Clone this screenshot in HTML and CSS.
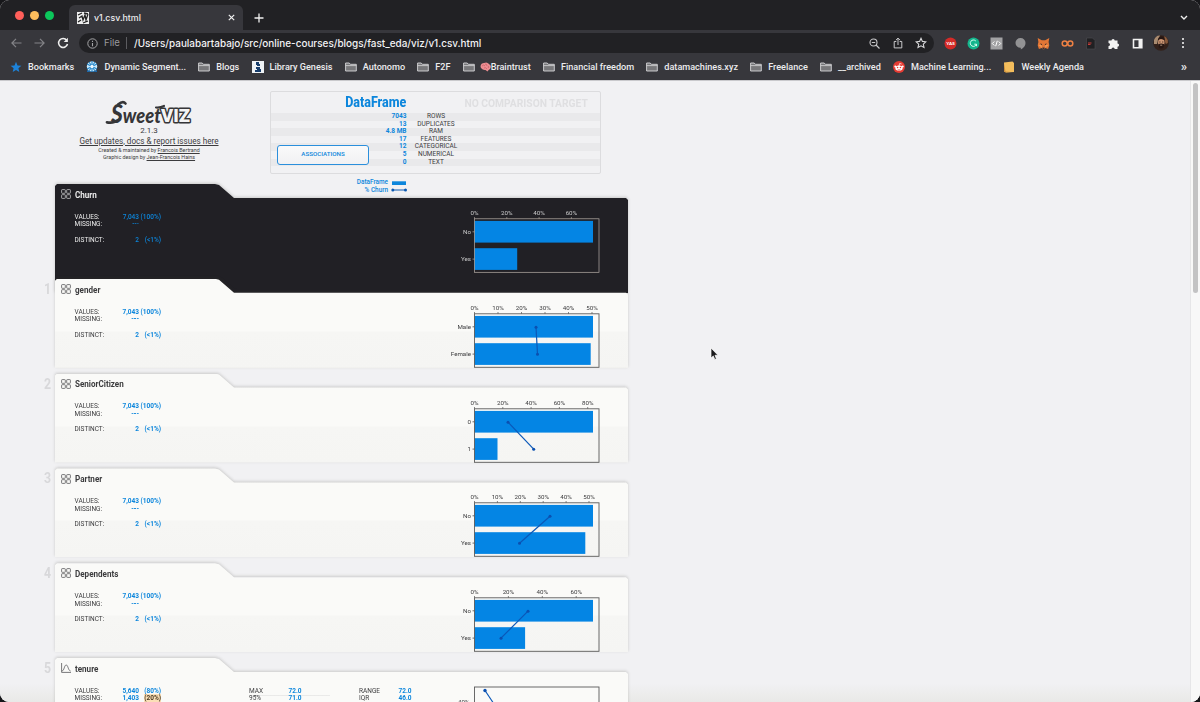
FILE: index.html
```html
<!DOCTYPE html>
<html lang="en">
<head>
    <meta charset="UTF-8">
    <meta name="viewport" content="width=device-width, initial-scale=1.0">
    <title>v1.csv.html</title>
    <link rel="stylesheet" href="styles.css">
</head>
<body>

    <svg class="defs" width="0" height="0">
        <symbol id="folder" viewBox="0 0 12 12">
            <path d="M.6 10V2h3.6l1.2 1.3h5.9V10z" fill="#77777a" stroke="#d6d6d8" stroke-width=".9"/>
            <path d="M.6 4.6h10.7" stroke="#d6d6d8" stroke-width=".8"/>
        </symbol>
        <symbol id="cat" viewBox="0 0 10 10">
            <g fill="none" stroke="currentColor" stroke-width=".9">
                <rect x=".6" y=".6" width="3.7" height="3.7" rx=".6"/>
                <rect x="5.7" y=".6" width="3.7" height="3.7" rx=".6"/>
                <rect x=".6" y="5.7" width="3.7" height="3.7" rx=".6"/>
                <rect x="5.7" y="5.7" width="3.7" height="3.7" rx=".6"/>
            </g>
        </symbol>
        <symbol id="num" viewBox="0 0 10 10">
            <path d="M.6 0v9.4H10" fill="none" stroke="currentColor" stroke-width=".9"/>
            <path d="M1 8C3.4 7.6 3.2 2 5.2 2S7 7.4 9.5 8" fill="none" stroke="currentColor" stroke-width=".9"/>
        </symbol>
    </svg>

    <div class="window">
        <div class="tabstrip">
            <div class="lights"><i class="red"></i><i class="yellow"></i><i class="green"></i></div>
            <div class="tab">
                <svg width="12" height="12" viewBox="0 0 12 12"><rect width="12" height="12" fill="#eee"/><path d="M1 3l4-2M2 6l3-2 1 4 2-5 1 5 2-6M1 10l3-2M6 11l5-2M7 1l4 1" stroke="#222" stroke-width="1.3" fill="none"/></svg>
                <span class="tab-title">v1.csv.html</span>
                <svg class="close" width="7" height="7" viewBox="0 0 7 7"><path d="M.8.8l5.4 5.4M6.2.8L.8 6.2" stroke="#f0f0f0" stroke-width="1.2"/></svg>
            </div>
            <svg class="plus" width="10" height="10" viewBox="0 0 10 10"><path d="M5 .5v9M.5 5h9" stroke="#f0f0f0" stroke-width="1.3"/></svg>
            <svg class="chevron" width="8" height="6" viewBox="0 0 8 6"><path d="M1 1l3 3 3-3" stroke="#eee" stroke-width="1.4" fill="none"/></svg>
        </div>

        <div class="toolbar">
            <div class="nav">
                <svg width="11" height="10" viewBox="0 0 11 10"><path d="M10.5 5H1M5 .8L.9 5 5 9.2" stroke="#838387" stroke-width="1.2" fill="none"/></svg>
                <svg width="11" height="10" viewBox="0 0 11 10"><path d="M.5 5H10M6 .8L10.1 5 6 9.2" stroke="#838387" stroke-width="1.2" fill="none"/></svg>
                <svg width="12" height="12" viewBox="0 0 12 12"><path d="M9.7 3.2A4.5 4.5 0 1 0 10.5 7" stroke="#f0f0f0" stroke-width="1.5" fill="none"/><path d="M10.9.8v4.2H6.7z" fill="#f0f0f0"/></svg>
            </div>
            <div class="address">
                <svg width="11" height="11" viewBox="0 0 11 11"><circle cx="5.5" cy="5.5" r="4.7" fill="none" stroke="#a5a5a8"/><path d="M5.5 4.9v3.3M5.5 2.7v1.2" stroke="#a5a5a8" stroke-width="1.1"/></svg>
                <span class="scheme">File</span>
                <span class="url">/Users/paulabartabajo/src/online-courses/blogs/fast_eda/viz/v1.csv.html</span>
                <div class="address-icons">
                    <svg width="11" height="11" viewBox="0 0 11 11"><circle cx="4.5" cy="4.5" r="3.5" fill="none" stroke="#c8c8ca" stroke-width="1.1"/><path d="M7 7l3.5 3.5M2.8 4.5h3.4" stroke="#c8c8ca" stroke-width="1.2"/></svg>
                    <svg width="10" height="12" viewBox="0 0 10 12"><path d="M3.3 4.5H1.2v6.4h7.6V4.5H6.7M5 8V1.2M2.9 3.2L5 1.1l2.1 2.1" stroke="#c8c8ca" fill="none"/></svg>
                    <svg width="12" height="12" viewBox="0 0 12 12"><path d="M6 1.3l1.4 3.1 3.4.4-2.5 2.3.7 3.4L6 8.8l-3 1.7.7-3.4L1.2 4.8l3.4-.4z" fill="none" stroke="#d8d8da" stroke-width="1.1"/></svg>
                </div>
            </div>
            <div class="extensions">
                <svg width="13" height="13" viewBox="0 0 13 13"><circle cx="6.5" cy="6.5" r="6" fill="#d42b28"/><text x="6.5" y="8.2" class="yas">YAS</text></svg>
                <svg width="13" height="13" viewBox="0 0 13 13"><circle cx="6.5" cy="6.5" r="6" fill="#14b58c"/><path d="M8.8 4A3.2 3.2 0 1 0 9.5 7.2H7.3M9.5 7.2v2" fill="none" stroke="#d9fff2"/></svg>
                <svg width="13" height="13" viewBox="0 0 13 13"><rect x=".5" y=".5" width="12" height="12" fill="#a2a2a4"/><path d="M4.3 4.5l-2 2 2 2M8.7 4.5l2 2-2 2M7.3 3.8L5.7 9.2" fill="none" stroke="#fff"/></svg>
                <svg width="13" height="13" viewBox="0 0 13 13"><path d="M6.5 1a5 4.8 0 0 1 5 4.9c0 3.2-2.5 5.5-4.7 6.5V10.7A4.9 4.9 0 0 1 1.5 5.9 5 4.8 0 0 1 6.5 1z" fill="#929294"/></svg>
                <svg width="13" height="13" viewBox="0 0 13 13"><path d="M.7 1l4.1 2.2h3.4L12.3 1l-.7 4 .7 3.3-1.2 3.6-2.9-.8-1 1.1H5.8l-1-1.1-2.9.8L.7 8.3 1.4 5z" fill="#e37635"/><path d="M1.5 8h3l.6 3M11.5 8h-3l-.6 3" fill="#f39c56"/><path d="M3.6 6.8l1.5.9M9.4 6.8l-1.5.9" stroke="#392c2b"/><path d="M5.5 10.5h2v1.4h-2z" fill="#382f36"/></svg>
                <svg width="13" height="13" viewBox="0 0 13 13"><circle cx="3.7" cy="6.5" r="2.5" fill="none" stroke="#ee8144" stroke-width="1.5"/><circle cx="9.3" cy="6.5" r="2.5" fill="none" stroke="#ee8144" stroke-width="1.5"/></svg>
                <svg width="13" height="13" viewBox="0 0 13 13"><path d="M2.5 1h6l2.5 2.5V12H2.5z" fill="#202023" stroke="#4d4d50" stroke-width=".6"/><path d="M4 6h3.5M4 7.5h2.5" stroke="#c83c38"/></svg>
                <svg width="13" height="13" viewBox="0 0 13 13"><path d="M1.5 3.5h3a1.6 1.6 0 1 1 3.2 0h2.8v3a1.6 1.6 0 1 1 0 3.2V12H7.7a1.6 1.6 0 0 0-3.2 0h-3V9a1.5 1.5 0 0 0 0-3z" fill="#f2f2f2"/></svg>
                <svg width="13" height="13" viewBox="0 0 13 13"><path d="M2.5 2.5h8.3v8.2H2.5z" fill="none" stroke="#f2f2f2" stroke-width="1.6"/><path d="M7.5 2.5h3.3v8.2H7.5z" fill="#f2f2f2"/></svg>
                <svg class="avatar" width="16" height="16" viewBox="0 0 16 16"><circle cx="8" cy="8" r="7.8" fill="#33211a"/><path d="M1 5q2-5 6-4.500L5 5 4 9H1z" fill="#a98b70"/><path d="M14.8 5q-1.500-3-3.500-4l.5 5 1 3 2-1z" fill="#8a5a3b"/><ellipse cx="8.3" cy="7.5" rx="3.2" ry="4.2" fill="#cd9673"/><path d="M4.7 5.5q3-3 7.2 0-.5-4-3.600-4T4.7 5.5M5.2 9.3q1-.8 3-.8t3 .8q0 4.200-3 4.200t-3-4.200" fill="#271713"/><path d="M6.3 7h1.2M9.1 7h1.2" stroke="#271713" stroke-width=".8"/><path d="M7.2 10.2h2" stroke="#d9b8a0" stroke-width=".7"/></svg>
                <svg class="dots" width="4" height="12" viewBox="0 0 4 12"><g fill="#f0f0f0"><circle cx="2" cy="2" r="1.1"/><circle cx="2" cy="6" r="1.1"/><circle cx="2" cy="10" r="1.1"/></g></svg>
            </div>
        </div>

        <div class="bookmarks">
            <a><svg width="12" height="12" viewBox="0 0 12 12"><path d="M6 .8l1.5 3.6 3.9.3-3 2.5.9 3.8L6 9l-3.3 2 .9-3.8-3-2.5 3.9-.3z" fill="#1d82d8"/></svg><span>Bookmarks</span></a>
            <a><svg width="12" height="12" viewBox="0 0 12 12"><circle cx="6" cy="5.5" r="5.2" fill="#c9e8fa"/><path d="M6 0v11M1 3l10 5M11 3L1 8M3 1l6 9M9 1L3 10" stroke="#2385c9" stroke-width="1.1"/><circle cx="6" cy="5.5" r="1.7" fill="#eaf8ff"/><path d="M1 9q5 3 10 0v2H1z" fill="#1c68aa"/></svg><span>Dynamic Segment...</span></a>
            <a><svg width="12" height="12"><use href="#folder"/></svg><span>Blogs</span></a>
            <a><svg width="12" height="12" viewBox="0 0 12 12"><path d="M0 0h12v12H0z" fill="#eef2f5"/><path d="M4 1h3v2h1v2H5v1h3v2h1v3H3V9h2V8H4V6h1V4H4z" fill="#173d6c"/></svg><span>Library Genesis</span></a>
            <a><svg width="12" height="12"><use href="#folder"/></svg><span>Autonomo</span></a>
            <a><svg width="12" height="12"><use href="#folder"/></svg><span>F2F</span></a>
            <a class="brain"><svg width="12" height="12"><use href="#folder"/></svg><svg class="brain-icon" width="11" height="10" viewBox="0 0 11 10"><path d="M1 6C-.5 3 2 1 4 1q3-1.500 5 1 3 2 1 5Q8 8 7.5 9.5L5.5 8Q3 8.5 1 6z" fill="#ec8e92"/><path d="M2 4q2-2 3 0M5 2q2 0 2 2M4 6q2-1 3 1M8 4q1.500 1 0 2" stroke="#c95a66" stroke-width=".7" fill="none"/></svg><span>Braintrust</span></a>
            <a><svg width="12" height="12"><use href="#folder"/></svg><span>Financial freedom</span></a>
            <a><svg width="12" height="12"><use href="#folder"/></svg><span>datamachines.xyz</span></a>
            <a><svg width="12" height="12"><use href="#folder"/></svg><span>Freelance</span></a>
            <a><svg width="12" height="12"><use href="#folder"/></svg><span>__archived</span></a>
            <a><svg width="12" height="12" viewBox="0 0 12 12"><circle cx="6" cy="6" r="6" fill="#e53b33"/><ellipse cx="6" cy="7" rx="3.7" ry="2.6" fill="#fff"/><circle cx="2.3" cy="5.5" r="1" fill="#fff"/><circle cx="9.7" cy="5.5" r="1" fill="#fff"/><path d="M6 5l.6-2.500 2 .5" stroke="#fff" stroke-width=".7" fill="none"/><circle cx="4.6" cy="6.5" r=".8" fill="#e53b33"/><circle cx="7.4" cy="6.5" r=".8" fill="#e53b33"/><path d="M4.6 8.3q1.400.8 2.8 0" stroke="#e53b33" stroke-width=".5" fill="none"/></svg><span>Machine Learning...</span></a>
            <a><svg width="12" height="12" viewBox="0 0 12 12"><path d="M1 1.500L9.500.5 11 2v9l-8 .5-2-1z" fill="#f3bd5c"/><path d="M1 2l1.500 8.500L8 11l-5 .5-2-1z" fill="#cc8f3c"/></svg><span>Weekly Agenda</span></a>
            <b class="more">»</b>
        </div>

        <div class="page">
            <div class="report">
                <header>
                    <div class="brand">
                        <svg class="logo" width="88" height="28" viewBox="0 0 88 28">
                            <path d="M2 23.300Q9 24.500 14 20.500" stroke="#363638" stroke-width="2.8" fill="none" stroke-linecap="round"/>
                            <path d="M13 5.500Q18 1.500 20.500 4.500" stroke="#363638" stroke-width="2.6" fill="none" stroke-linecap="round"/>
                            <text x="6" y="23.5" class="logo-sweet" textLength="50" lengthAdjust="spacingAndGlyphs"><tspan class="logo-s">S</tspan>weet</text>
                            <path d="M51 8.500q4 .5 8-1.500" stroke="#363638" stroke-width="2.2" fill="none" stroke-linecap="round"/>
                            <text x="56" y="22.8" class="logo-viz" textLength="29" lengthAdjust="spacingAndGlyphs">VIZ</text>
                        </svg>
                        <div class="version">2.1.3</div>
                        <a class="updates">Get updates, docs &amp; report issues here</a>
                        <div class="credit">Created &amp; maintained by <a>Francois Bertrand</a></div>
                        <div class="credit">Graphic design by <a>Jean-Francois Hains</a></div>
                    </div>

                    <div class="overview">
                        <div class="summary">
                            <div class="summary-head">
                                <h1><span>DataFrame</span></h1>
                                <h2><span>NO COMPARISON TARGET</span></h2>
                            </div>
                            <div class="row"><b>7043</b><span>ROWS</span></div>
                            <div class="row"><b>13</b><span>DUPLICATES</span></div>
                            <div class="row"><b>4.8 MB</b><span>RAM</span></div>
                            <div class="row"><b>17</b><span>FEATURES</span></div>
                            <div class="row"><b>12</b><span>CATEGORICAL</span></div>
                            <div class="row"><b>5</b><span>NUMERICAL</span></div>
                            <div class="row"><b>0</b><span>TEXT</span></div>
                            <button>ASSOCIATIONS</button>
                        </div>
                        <div class="legend">
                            <div>DataFrame <svg width="16" height="6" viewBox="0 0 16 6"><path d="M1 1.3h14v3.7H1z" fill="#0c86dc"/></svg></div>
                            <div>% Churn <svg width="16" height="6" viewBox="0 0 16 6"><path d="M1.5 3h13" stroke="#0b58b0"/><circle cx="1.8" cy="3" r="1.5" fill="#0b58b0"/><circle cx="14.5" cy="3" r="1.5" fill="#0b58b0"/></svg></div>
                        </div>
                    </div>
                </header>

                <main id="features"></main>
            </div>
            <div class="scrollbar"><div class="thumb"></div></div>
        </div>

        <svg class="cursor" width="9" height="14" viewBox="0 0 9 14"><path d="M1 1v10l2.3-2.1L4.8 12.5l1.6-.7L5 8.300h3z" fill="#1b1b1d" stroke="#fff" stroke-width=".7"/></svg>
    </div>

    <script src="script.js"></script>
</body>
</html>
```
FILE: script.js
```js
// bar ends, line points and tick step are in chart pixels
const features = [
    { name: 'Churn', target: true, step: 32.3, ticks: ['0%', '20%', '40%', '60%'], bars: [['No', 118.5], ['Yes', 42.7]] },
    { name: 'gender', step: 23.5, ticks: ['0%', '10%', '20%', '30%', '40%', '50%'], bars: [['Male', 118.5], ['Female', 116.2]], line: [61.5, 63] },
    { name: 'SeniorCitizen', step: 28.3, ticks: ['0%', '20%', '40%', '60%', '80%'], bars: [['0', 118.5], ['1', 23]], line: [33.5, 59.2] },
    { name: 'Partner', step: 22.9, ticks: ['0%', '10%', '20%', '30%', '40%', '50%'], bars: [['No', 118.5], ['Yes', 110.8]], line: [75.5, 45] },
    { name: 'Dependents', step: 33.9, ticks: ['0%', '20%', '40%', '60%'], bars: [['No', 118.5], ['Yes', 50.6]], line: [53.5, 26.5] },
    { name: 'tenure', numeric: true }
];

const left = 35.5;

function drawChart(f) {
    let out = '';
    if (f.numeric) {
        out += `<path class="line" d="M${left + 10.5} 32.5l12 18"/><circle class="dot" cx="${left + 10.5}" cy="32.5" r="1.7"/>`;
        out += `<text class="side" x="${left - 5}" y="46">40%</text>`;
        out += `<rect class="axis" x="${left}" y="29" width="124.5" height="59"/>`;
    } else {
        f.ticks.forEach((t, i) => {
            const x = left + i * f.step;
            out += `<text class="top" x="${x}" y="31.2">${t}</text><path class="axis" d="M${x} 33.2v1.5"/>`;
        });
        f.bars.forEach(([label, width], i) => {
            const y = 36.9 + i * 27.3;
            out += `<rect class="bar" x="${left}" y="${y}" width="${width}" height="21.7"/>`;
            out += `<text class="side" x="${left - 3.5}" y="${y + 13.2}">${label}</text><path class="axis" d="M${left - 2} ${y + 10.9}h2"/>`;
        });
        if (f.line) {
            const [a, b] = f.line;
            out += `<path class="line" d="M${left + a} 48.2L${left + b} 75.2"/>`;
            out += `<circle class="dot" cx="${left + a}" cy="48.2" r="1.5"/><circle class="dot" cx="${left + b}" cy="75.2" r="1.5"/>`;
        }
        out += `<rect class="axis" x="${left}" y="34.8" width="124.5" height="53.5"/>`;
    }
    return `<svg class="chart" width="165" height="89" viewBox="0 0 165 89">${out}</svg>`;
}

function drawStats(f) {
    if (f.numeric) {
        return `
            <dl class="counts">
                <dt>VALUES:</dt><dd>5,640</dd><dd>(80%)</dd>
                <dt>MISSING:</dt><dd>1,403</dd><dd><mark>(20%)</mark></dd>
            </dl>
            <dl class="extra max"><dt>MAX</dt><dd>72.0</dd><dt>95%</dt><dd>71.0</dd></dl>
            <dl class="extra"><dt>RANGE</dt><dd>72.0</dd><dt>IQR</dt><dd>46.0</dd></dl>`;
    }
    return `
        <dl class="counts">
            <dt>VALUES:</dt><dd>7,043</dd><dd>(100%)</dd>
            <dt>MISSING:</dt><dd>---</dd><dd></dd>
            <dt class="gap">DISTINCT:</dt><dd class="gap">2</dd><dd class="gap">(&lt;1%)</dd>
        </dl>`;
}

document.getElementById('features').innerHTML = features.map((f, i) => `
    <section class="feature ${f.target ? 'target' : ''}">
        <div class="rank"><span>${i || ''}</span></div>
        <div class="card">
            <div class="info">
                <h3><svg width="10" height="10"><use href="#${f.numeric ? 'num' : 'cat'}"/></svg><span>${f.name}</span></h3>
                <div class="stats">${drawStats(f)}</div>
            </div>
            ${drawChart(f)}
        </div>
    </section>`).join('');
```
FILE: styles.css
```css
* {
    margin: 0;
    padding: 0;
    box-sizing: border-box;
}

body {
    background: #17171a;
    font-family: Roboto, "Liberation Sans", sans-serif;
    height: 100vh;
    overflow: hidden;
}

svg {
    flex: none;
    display: block;
}

.defs {
    position: absolute;
}

.window {
    position: relative;
    height: 702px;
    border-radius: 9px;
    overflow: hidden;
    display: flex;
    flex-direction: column;
    background: #f1f1f3;
}

/* browser chrome */
.tabstrip {
    height: 30px;
    background: #212124;
    display: flex;
    align-items: center;
}

.lights {
    display: flex;
    gap: 6px;
    width: 69px;
    padding-left: 15px;
}

.lights i {
    width: 9px;
    height: 9px;
    border-radius: 50%;
}

.red { background: #ff5f5a; }
.yellow { background: #fdbd5c; }
.green { background: #0cc75b; }

.tab {
    width: 174px;
    height: 25px;
    align-self: flex-end;
    background: #37373c;
    border-radius: 6px 6px 0 0;
    display: flex;
    align-items: center;
    padding: 0 8px;
}

.tab-title {
    margin-left: 5px;
    color: #ececee;
    font: 500 8.8px Inter, sans-serif;
}

.close {
    margin-left: auto;
}

.plus {
    margin: 5px 0 0 11px;
}

.chevron {
    margin: 5px 12px 0 auto;
}

.toolbar {
    height: 25px;
    padding-top: 1px;
    background: #37373c;
    display: flex;
    align-items: center;
}

.nav {
    display: flex;
    align-items: center;
    gap: 12px;
    width: 79px;
    padding-left: 11px;
}

.address {
    width: 855px;
    height: 20px;
    padding: 0 7px 0 8px;
    border-radius: 10px;
    background: #212124;
    display: flex;
    align-items: center;
    font: 500 9.93px Inter, sans-serif;
}

.scheme {
    width: 23px;
    margin-left: 6px;
    border-right: 1px solid #5c5c60;
    color: #98989c;
    font-weight: 400;
    font-size: 9.6px;
    line-height: 12px;
}

.url {
    color: #f3f3f5;
    margin-left: 7px;
}

.address-icons {
    margin-left: auto;
    display: flex;
    align-items: center;
    gap: 12.5px;
}

.extensions {
    display: flex;
    align-items: center;
    gap: 10.4px;
    padding-left: 9.6px;
}

.yas {
    font: 900 4.5px Lato, sans-serif;
    fill: #fff;
    text-anchor: middle;
}

.avatar {
    margin-left: -1px;
}

.dots {
    margin-left: 1px;
}

.bookmarks {
    height: 25px;
    background: #37373c;
    display: flex;
    align-items: center;
    gap: 12.2px;
    padding: 0 13px 2px 10px;
    color: #ececee;
    font: 500 9.1px Roboto, sans-serif;
    white-space: nowrap;
}

.bookmarks a {
    display: flex;
    align-items: center;
    gap: 6px;
}

.bookmarks .brain {
    gap: 5px;
}

.brain-icon {
    margin-right: -5px;
}

.more {
    margin-left: auto;
    font-size: 13px;
    font-weight: 500;
}

/* report page */
.page {
    flex: 1;
    min-height: 0;
    overflow: hidden;
    display: flex;
    justify-content: space-between;
    border-top: 1px solid #c9c9cc;
    background: linear-gradient(#f1f1f3 97%, #e9e9e7);
}

.report {
    width: 640px;
    color: #3c3c3e;
}

.scrollbar {
    width: 10px;
    padding: 2px 2px 0;
    border-left: 1px solid #e6e6e8;
    background: #f8f8f8;
}

.thumb {
    height: 210px;
    border-radius: 3px;
    background: #c3c3c4;
}

header {
    height: 103px;
    display: flex;
}

.brand {
    width: 270px;
    padding: 18px 0 0 28px;
    display: flex;
    flex-direction: column;
    align-items: center;
}

.logo {
    overflow: visible;
}

.logo-sweet {
    font: italic 900 21px Lato, sans-serif;
    fill: #363638;
}

.logo-s {
    font-size: 26px;
}

.logo-viz {
    font: 900 19px Roboto, sans-serif;
    fill: #f4f4f5;
    stroke: #363638;
    stroke-width: 3px;
    stroke-linejoin: round;
    paint-order: stroke;
}

.version {
    font-size: 8px;
    line-height: 9px;
    margin-top: -1.4px;
}

.updates {
    font-size: 8.15px;
    line-height: 12px;
    text-decoration: underline;
}

.credit {
    font-size: 5.35px;
    line-height: 7.4px;
}

.credit a {
    text-decoration: underline;
}

.overview {
    width: 331px;
    padding-top: 10px;
}

.summary {
    position: relative;
    height: 83px;
    border: 1px solid #dcdcde;
    border-radius: 2px;
}

.summary-head {
    height: 21px;
    display: flex;
    align-items: center;
    justify-content: space-between;
    padding-right: 12px;
}

h1 {
    width: 135.5px;
    text-align: right;
    font-size: 14.4px;
    font-weight: 800;
    color: #0c86dc;
}

h2 {
    font-size: 11.8px;
    color: #dfdfe1;
}

h1 span,
h2 span {
    display: inline-block;
    transform: scaleX(.87);
    transform-origin: right;
}

.row {
    height: 7.6px;
    line-height: 7.8px;
    display: flex;
    font-size: 6.5px;
}

.row:nth-child(even) {
    background: #e9e9eb;
}

.row b {
    width: 135.5px;
    text-align: right;
    color: #0c86dc;
}

.row span {
    width: 59px;
    text-align: center;
}

/* sits over the striped rows */
.summary button {
    position: absolute;
    left: 6px;
    bottom: 8px;
    width: 92px;
    height: 20px;
    padding-bottom: 2px;
    border: 1px solid #2b8fdc;
    border-radius: 3px;
    background: linear-gradient(#fafafa, #f1f1f3);
    color: #0c86dc;
    font: 500 6.2px Roboto, sans-serif;
}

.legend {
    width: 137px;
    padding-top: 5px;
    color: #0c86dc;
    font-size: 6.4px;
    font-weight: 500;
    line-height: 7.5px;
}

.legend div {
    display: flex;
    align-items: center;
    justify-content: flex-end;
    gap: 3px;
}

/* feature cards */
.feature {
    display: flex;
    height: 94.8px;
}

.rank {
    width: 55px;
    height: 21px;
    padding-right: 4px;
    text-align: right;
    color: #d8d8da;
    font-size: 14px;
    line-height: 21px;
    font-weight: bold;
}

.rank span {
    display: inline-block;
    transform: scaleX(.88);
    transform-origin: right;
}

.card {
    position: relative;
    width: 573px;
    height: 89px;
    display: flex;
    filter: drop-shadow(0 -1px 1.5px rgba(60, 60, 50, .22));
}

.card::before {
    content: "";
    position: absolute;
    inset: 0;
    z-index: -1;
    background: linear-gradient(#fafaf8 0, #fafaf8 58%, #f6f6f4 60%, #f5f5f3);
    clip-path: polygon(0 2px, 2px 0, 160px 0, 164px 1px, 179px 14px, 571px 14px, 573px 16px, 573px 100%, 0 100%);
}

.target .card {
    height: 109px;
    color: #ececec;
}

.target .card::before {
    background: #212025;
}

.info {
    width: 384px;
}

h3 {
    height: 20.5px;
    display: flex;
    align-items: center;
    gap: 3.5px;
    padding-left: 6px;
    font-size: 9.5px;
}

h3 svg {
    color: #6a6a6c;
}

.target h3 svg {
    color: #b5b5b7;
}

h3 span {
    display: inline-block;
    transform: scaleX(.85);
    transform-origin: left;
}

.stats {
    display: flex;
    margin-top: 9.3px;
    padding-left: 19.5px;
    font-size: 6.5px;
    line-height: 7.7px;
}

.counts {
    display: grid;
    grid-template-columns: 37.5px 27px 22px;
    grid-auto-rows: min-content;
    flex: none;
    width: 174.5px;
}

.counts dt,
.counts dd {
    height: 7.7px;
}

.stats dd {
    color: #0c86dc;
    font-weight: bold;
    text-align: right;
}

.target .stats dd {
    font-weight: 500;
}

.stats .gap {
    margin-top: 7.7px;
}

mark {
    background: #fbdfb6;
    color: #4a3a24;
}

.extra {
    display: grid;
    grid-template-columns: 28.5px 24px;
    grid-auto-rows: 7.7px;
    flex: none;
    width: 110px;
}

.max {
    background: linear-gradient(#d9d9d9, #d9d9d9) 0 7.6px / 81px .5px no-repeat;
}

.chart {
    overflow: hidden;
}

.chart text {
    font-size: 6.2px;
    fill: #3c3c3e;
}

.target .chart text {
    fill: #c9c9ca;
}

.chart .top {
    text-anchor: middle;
}

.chart .side {
    text-anchor: end;
}

.bar {
    fill: #0485e4;
}

.axis {
    fill: none;
    stroke: #5a5a5a;
    stroke-width: .9;
}

.target .axis {
    stroke: #b8b0a8;
    stroke-width: .7;
}

.line {
    fill: none;
    stroke: #0b58b8;
    stroke-width: 1.2;
}

.dot {
    fill: #0b50b0;
}

/* mouse pointer */
.cursor {
    position: absolute;
    left: 710px;
    top: 347px;
}
```
